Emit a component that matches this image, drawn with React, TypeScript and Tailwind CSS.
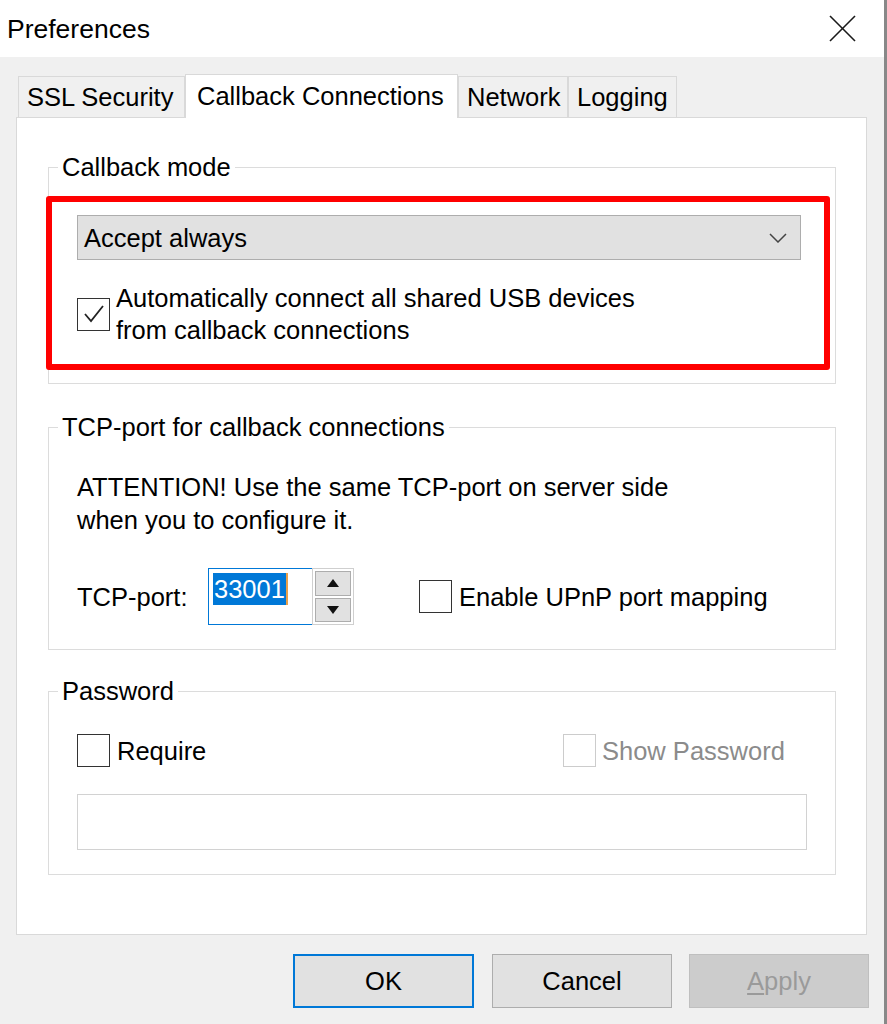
const CheckBox = ({ checked = false, disabled = false }: { checked?: boolean; disabled?: boolean }) => (
    <div
        className={`w-[33px] h-[33px] shrink-0 bg-white border flex items-center justify-center ${
            disabled ? 'border-[#cccccc]' : 'border-[#333333]'
        }`}
    >
        {checked && (
            <svg width="24" height="24" viewBox="0 0 24 24">
                <polyline points="3,12 9,19 21,4" fill="none" stroke="#222" strokeWidth="1.8" />
            </svg>
        )}
    </div>
)

const Tab = ({ label, active = false, w }: { label: string; active?: boolean; w: string }) => (
    <div
        className={`${w} flex items-center border border-b-0 border-[#d9d9d9] ${
            active
                ? 'h-[44px] -mb-px bg-white relative z-10 pl-[11px] pb-[2px]'
                : 'h-[41px] bg-[#f0f0f0] pl-[8px]'
        }`}
    >
        {label}
    </div>
)

export default function App() {
    return (
        <div className="flex w-[887px] h-[1024px] bg-[#f0f0f0] text-black font-['Liberation_Sans',Arial,sans-serif] text-[25.5px] leading-[32px]">
            <div className="w-[884px] h-full flex flex-col">
                {/* title bar */}
                <div className="h-[57px] bg-white flex items-center justify-between pl-[7px] pr-[28px]">
                    <span className="text-[26.5px]">Preferences</span>
                    <svg width="27" height="27" viewBox="0 0 27 27">
                        <line x1="1" y1="1" x2="26" y2="26" stroke="#1a1a1a" strokeWidth="1.6" />
                        <line x1="26" y1="1" x2="1" y2="26" stroke="#1a1a1a" strokeWidth="1.6" />
                    </svg>
                </div>

                {/* tabs */}
                <div className="mt-[17px] h-[43px] flex items-end pl-[18px]">
                    <Tab label="SSL Security" w="w-[167px]" />
                    <Tab label="Callback Connections" w="w-[273px]" active />
                    <Tab label="Network" w="w-[110px]" />
                    <Tab label="Logging" w="w-[109px]" />
                </div>

                {/* tab panel */}
                <div className="ml-[16px] w-[851px] h-[818px] bg-white border border-[#d9d9d9] pt-[35px] pl-[31px]">
                    <fieldset className="w-[788px] border border-[#dcdcdc] pb-[13px]">
                        <legend className="ml-[9px] px-[4px] leading-[28px]">Callback mode</legend>
                        <div className="-ml-[3px] mt-[15px] w-[784px] border-[6px] border-[#ff0000] rounded-[3px] pt-[13px] pl-[25px] pr-[23px] pb-[18px]">
                            <div className="h-[45px] bg-[#e1e1e1] border border-[#adadad] flex items-center justify-between pl-[6px] pr-[13px]">
                                <span>Accept always</span>
                                <svg width="18" height="10" viewBox="0 0 18 10">
                                    <polyline points="1,1 9,9 17,1" fill="none" stroke="#444" strokeWidth="1.5" />
                                </svg>
                            </div>
                            <div className="mt-[22px] flex items-center gap-[6px]">
                                <CheckBox checked />
                                <div>
                                    Automatically connect all shared USB devices
                                    <br />
                                    from callback connections
                                </div>
                            </div>
                        </div>
                    </fieldset>

                    <fieldset className="mt-[29px] w-[788px] border border-[#dcdcdc] pl-[28px] pb-[24px]">
                        <legend className="-ml-[19px] px-[4px] leading-[28px]">TCP-port for callback connections</legend>
                        <div className="pt-[30px] leading-[33px]">
                            ATTENTION! Use the same TCP-port on server side
                            <br />
                            when you to configure it.
                        </div>
                        <div className="mt-[31px] flex items-center">
                            <span className="w-[131px]">TCP-port:</span>
                            <div className="flex h-[57px]">
                                <div className="w-[104px] h-full border border-[#0078d7] border-r-0 bg-white pt-[4px] pl-[4px]">
                                    <div className="flex items-start">
                                        <span className="bg-[#0078d7] text-white leading-[32px] px-[1px]">33001</span>
                                        <span className="w-[2px] h-[32px] bg-[#e8a04a]" />
                                    </div>
                                </div>
                                <div className="w-[42px] h-full border border-[#cfcfcf] bg-white flex flex-col gap-[2px] p-[2px]">
                                    <div className="flex-1 bg-[#e1e1e1] border border-[#adadad] flex items-center justify-center">
                                        <svg width="12" height="8" viewBox="0 0 12 8">
                                            <polygon points="6,0 12,8 0,8" fill="#111" />
                                        </svg>
                                    </div>
                                    <div className="flex-1 bg-[#e1e1e1] border border-[#adadad] flex items-center justify-center">
                                        <svg width="12" height="8" viewBox="0 0 12 8">
                                            <polygon points="0,0 12,0 6,8" fill="#111" />
                                        </svg>
                                    </div>
                                </div>
                            </div>
                            <div className="ml-[65px] flex items-center gap-[7px]">
                                <CheckBox />
                                <span>Enable UPnP port mapping</span>
                            </div>
                        </div>
                    </fieldset>

                    <fieldset className="mt-[27px] w-[788px] border border-[#dcdcdc] pl-[28px] pb-[24px]">
                        <legend className="-ml-[19px] px-[4px] leading-[28px]">Password</legend>
                        <div className="pt-[29px] flex items-center">
                            <div className="w-[486px] flex items-center gap-[7px]">
                                <CheckBox />
                                <span>Require</span>
                            </div>
                            <div className="flex items-center gap-[6px] text-[#8b8b8b]">
                                <CheckBox disabled />
                                <span>Show Password</span>
                            </div>
                        </div>
                        <div className="mt-[27px] w-[730px] h-[56px] border border-[#d2d2d2] bg-white" />
                    </fieldset>
                </div>

                {/* buttons */}
                <div className="mt-[19px] flex justify-end pr-[15px]">
                    <button className="w-[181px] h-[54px] bg-[#e1e1e1] border-2 border-[#0078d7] flex items-center justify-center">
                        OK
                    </button>
                    <button className="ml-[18px] w-[180px] h-[54px] bg-[#e1e1e1] border border-[#adadad] flex items-center justify-center">
                        Cancel
                    </button>
                    <button className="ml-[17px] w-[180px] h-[54px] bg-[#cccccc] border border-[#bfbfbf] text-[#9a9a9a] flex items-center justify-center">
                        <span>
                            <span className="underline underline-offset-[3px]">A</span>pply
                        </span>
                    </button>
                </div>
            </div>
            <div className="w-[3px] h-full bg-[#888888]" />
        </div>
    )
}
